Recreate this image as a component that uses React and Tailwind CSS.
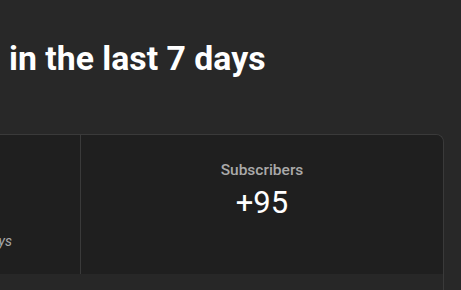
export default function App() {
    return (
        <div
            className="w-[461px] h-[290px] overflow-hidden bg-[#282828] text-white"
            style={{ fontFamily: "Roboto, 'Liberation Sans', sans-serif" }}
        >
            <h1 className="pt-[38px] pl-[9px] text-[33.8px] leading-[42px] font-bold whitespace-nowrap">
                in the last 7 days
            </h1>

            <div className="mt-[54px] ml-[-119px] w-[563px] rounded-tr-[8px] border-t border-r border-[#3a3a3a] overflow-hidden">
                <div className="flex h-[139px] bg-[#1f1f1f]">
                    <div className="w-[200px] border-r border-[#3a3a3a] flex flex-col justify-end pb-[22px]">
                        <p className="text-right pr-[68px] text-[14px] italic text-[#aaaaaa] whitespace-nowrap">
                            Last 7 days
                        </p>
                    </div>
                    <div className="flex-1 flex flex-col items-center pt-[25px]">
                        <p className="text-[15.5px] font-medium text-[#aaaaaa] leading-[20px]">
                            Subscribers
                        </p>
                        <p className="text-[31px] leading-[36px] mt-[5px]">+95</p>
                    </div>
                </div>
                <div className="h-[40px] bg-[#272727]" />
            </div>
        </div>
    );
}
